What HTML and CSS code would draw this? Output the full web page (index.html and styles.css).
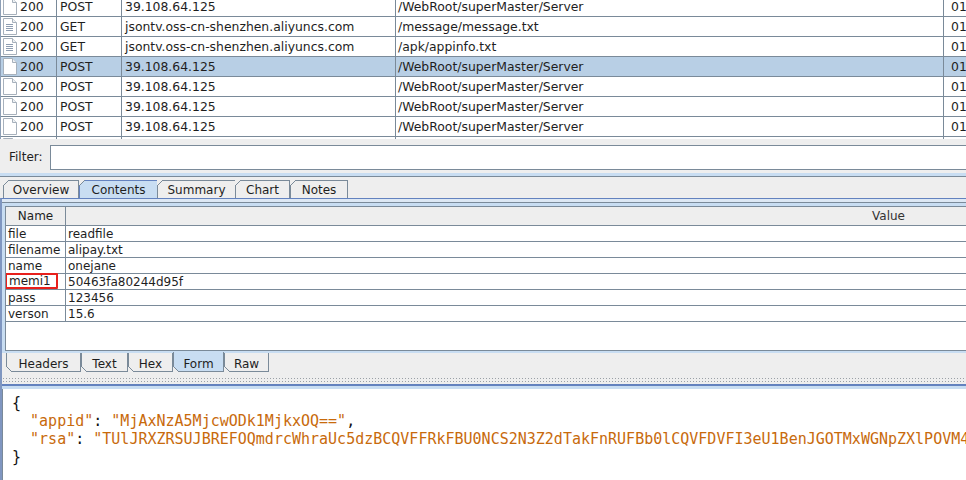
FILE: index.html
```html
<!DOCTYPE html>
<html>
<head>
<meta charset="utf-8">
<link rel="stylesheet" href="styles.css">
</head>
<body>
<div class="req">
  <div class="req-list">
    <div class="row">
      <div class="cell c-code"><svg class="doc" width="14" height="17" viewBox="0 0 14 17"><path d="M0.5 0.5H9.5L13.5 4.5V16.5H0.5Z" fill="#fff" stroke="#a7b1bc"/><path d="M9.5 0.5V4.5H13.5" fill="#eef1f4" stroke="#a7b1bc"/></svg><span>200</span></div>
      <div class="cell c-m">POST</div><div class="cell c-host">39.108.64.125</div><div class="cell c-path">/WebRoot/superMaster/Server</div><div class="cell c-last">01</div>
    </div>
    <div class="row">
      <div class="cell c-code"><svg class="doc" width="14" height="17" viewBox="0 0 14 17"><path d="M0.5 0.5H9.5L13.5 4.5V16.5H0.5Z" fill="#fff" stroke="#a7b1bc"/><path d="M9.5 0.5V4.5H13.5" fill="#eef1f4" stroke="#a7b1bc"/><path d="M3 6.5H10M3 8.5H10M3 10.5H10M3 12.5H10" stroke="#8d9db2"/></svg><span>200</span></div>
      <div class="cell c-m">GET</div><div class="cell c-host">jsontv.oss-cn-shenzhen.aliyuncs.com</div><div class="cell c-path">/message/message.txt</div><div class="cell c-last">01</div>
    </div>
    <div class="row">
      <div class="cell c-code"><svg class="doc" width="14" height="17" viewBox="0 0 14 17"><path d="M0.5 0.5H9.5L13.5 4.5V16.5H0.5Z" fill="#fff" stroke="#a7b1bc"/><path d="M9.5 0.5V4.5H13.5" fill="#eef1f4" stroke="#a7b1bc"/><path d="M3 6.5H10M3 8.5H10M3 10.5H10M3 12.5H10" stroke="#8d9db2"/></svg><span>200</span></div>
      <div class="cell c-m">GET</div><div class="cell c-host">jsontv.oss-cn-shenzhen.aliyuncs.com</div><div class="cell c-path">/apk/appinfo.txt</div><div class="cell c-last">01</div>
    </div>
    <div class="row sel">
      <div class="cell c-code"><svg class="doc" width="14" height="17" viewBox="0 0 14 17"><path d="M0.5 0.5H9.5L13.5 4.5V16.5H0.5Z" fill="#fff" stroke="#a7b1bc"/><path d="M9.5 0.5V4.5H13.5" fill="#eef1f4" stroke="#a7b1bc"/></svg><span>200</span></div>
      <div class="cell c-m">POST</div><div class="cell c-host">39.108.64.125</div><div class="cell c-path">/WebRoot/superMaster/Server</div><div class="cell c-last">01</div>
    </div>
    <div class="row">
      <div class="cell c-code"><svg class="doc" width="14" height="17" viewBox="0 0 14 17"><path d="M0.5 0.5H9.5L13.5 4.5V16.5H0.5Z" fill="#fff" stroke="#a7b1bc"/><path d="M9.5 0.5V4.5H13.5" fill="#eef1f4" stroke="#a7b1bc"/></svg><span>200</span></div>
      <div class="cell c-m">POST</div><div class="cell c-host">39.108.64.125</div><div class="cell c-path">/WebRoot/superMaster/Server</div><div class="cell c-last">01</div>
    </div>
    <div class="row">
      <div class="cell c-code"><svg class="doc" width="14" height="17" viewBox="0 0 14 17"><path d="M0.5 0.5H9.5L13.5 4.5V16.5H0.5Z" fill="#fff" stroke="#a7b1bc"/><path d="M9.5 0.5V4.5H13.5" fill="#eef1f4" stroke="#a7b1bc"/></svg><span>200</span></div>
      <div class="cell c-m">POST</div><div class="cell c-host">39.108.64.125</div><div class="cell c-path">/WebRoot/superMaster/Server</div><div class="cell c-last">01</div>
    </div>
    <div class="row">
      <div class="cell c-code"><svg class="doc" width="14" height="17" viewBox="0 0 14 17"><path d="M0.5 0.5H9.5L13.5 4.5V16.5H0.5Z" fill="#fff" stroke="#a7b1bc"/><path d="M9.5 0.5V4.5H13.5" fill="#eef1f4" stroke="#a7b1bc"/></svg><span>200</span></div>
      <div class="cell c-m">POST</div><div class="cell c-host">39.108.64.125</div><div class="cell c-path">/WebRoot/superMaster/Server</div><div class="cell c-last">01</div>
    </div>
    <div class="row">
      <div class="cell c-code"><svg class="doc" width="14" height="17" viewBox="0 0 14 17"><path d="M0.5 0.5H9.5L13.5 4.5V16.5H0.5Z" fill="#fff" stroke="#a7b1bc"/><path d="M9.5 0.5V4.5H13.5" fill="#eef1f4" stroke="#a7b1bc"/></svg><span>200</span></div>
      <div class="cell c-m">POST</div><div class="cell c-host">39.108.64.125</div><div class="cell c-path">/WebRoot/superMaster/Server</div><div class="cell c-last">01</div>
    </div>
  </div>
</div>

<div class="filter">
  <span class="filter-label">Filter:</span>
  <div class="filter-input"></div>
</div>
<div class="split1"></div>

<div class="tabs">
  <div class="tab t-overview">Overview</div>
  <div class="tab t-contents sel">Contents</div>
  <div class="tab t-summary">Summary</div>
  <div class="tab t-chart">Chart</div>
  <div class="tab t-notes">Notes</div>
</div>

<div class="detail">
  <div class="band"></div>
  <div class="pane">
    <div class="scroll">
      <div class="form-head">
        <div class="fh-name">Name</div>
        <div class="fh-value">Value</div>
      </div>
      <div class="frow"><div class="fn">file</div><div class="fv">readfile</div></div>
      <div class="frow"><div class="fn">filename</div><div class="fv">alipay.txt</div></div>
      <div class="frow"><div class="fn">name</div><div class="fv">onejane</div></div>
      <div class="frow"><div class="fn"><span class="mark">memi1</span></div><div class="fv">50463fa80244d95f</div></div>
      <div class="frow"><div class="fn">pass</div><div class="fv">123456</div></div>
      <div class="frow"><div class="fn">verson</div><div class="fv">15.6</div></div>
    </div>
  </div>
  <div class="btabs">
    <div class="btab b-headers">Headers</div>
    <div class="btab b-text">Text</div>
    <div class="btab b-hex">Hex</div>
    <div class="btab b-form sel">Form</div>
    <div class="btab b-raw">Raw</div>
  </div>
  <div class="divider"><div class="dots"></div></div>
  <div class="respane">
    <pre class="json">{
  <span class="s">"appid"</span>: <span class="s">"MjAxNzA5MjcwODk1MjkxOQ=="</span>,
  <span class="s">"rsa"</span>: <span class="s">"TUlJRXZRSUJBREFOQmdrcWhraUc5dzBCQVFFRkFBU0NCS2N3Z2dTakFnRUFBb0lCQVFDVFI3eU1BenJGOTMxWGNpZXlPOVM4</span>
}</pre>
  </div>
</div>
</body>
</html>
```

FILE: styles.css
```css
* { box-sizing: border-box; }
html, body { margin: 0; padding: 0; }
body {
  width: 966px;
  height: 480px;
  overflow: hidden;
  background: #eeeeee;
  font-family: "DejaVu Sans", sans-serif;
  font-size: 12px;
  color: #1e1e1e;
}

/* request table */
.req {
  height: 139px;
  overflow: hidden;
  background: #fff;
  border-left: 1px solid #8d9fb6;
}
.req-list { margin-top: -3px; font-size: 12.4px; }
.row {
  display: grid;
  grid-template-columns: 56px 65px 274px 548px 80px;
  height: 20px;
  border-bottom: 1px solid #7a8a99;
}
.row.sel { background: #b8cfe5; }
.cell {
  border-right: 1px solid #7a8a99;
  line-height: 19px;
  white-space: nowrap;
  overflow: hidden;
}
.c-code { display: flex; align-items: flex-start; padding-left: 2px; }
.c-code .doc { margin-top: 1px; margin-right: 3px; flex: none; }
.c-m { padding-left: 3px; }
.c-host { padding-left: 3px; }
.c-path { padding-left: 2px; }
.c-last { padding-left: 7px; border-right: none; }

/* filter */
.filter {
  height: 33px;
  display: flex;
  align-items: center;
  padding: 3px 0 0 9px;
}
.filter-label { width: 41px; }
.filter-input {
  flex: 1;
  height: 25px;
  background: #fff;
  border: 1px solid #7a8a99;
  border-right: none;
}
.split1 {
  height: 5px;
  background: linear-gradient(#eeeeee 0 1px, #c8ddf2 1px 4px, #7a8a99 4px 5px);
}

/* top tabs */
.tabs {
  height: 21px;
  display: flex;
  align-items: flex-end;
  padding-left: 3px;
}
.tab {
  position: relative;
  height: 18px;
  line-height: 18px;
  text-align: center;
  border: 1px solid #7a8a99;
  border-bottom: none;
  background: #eeeeee;
}
.t-overview { width: 76px; }
.t-contents { width: 79px; }
.t-summary { width: 79px; margin-left: -1px; }
.t-chart { width: 55px; margin-left: -1px; }
.t-notes { width: 58px; }
.tab.sel { background: #c8ddf2; border-color: #6382bf; }
.tab::before {
  content: "";
  position: absolute;
  left: -1px;
  top: -1px;
  width: 6px;
  height: 6px;
  background: linear-gradient(135deg, #eeeeee 0 42%, #7a8a99 42% 58%, transparent 58%);
}

/* detail */
.detail {
  border-top: 1px solid #6382bf;
  border-left: 2px solid #7f96c0;
}
.band {
  height: 4px;
  background: linear-gradient(#dde8f4 0 3px, #7a8a99 3px 4px);
}
.pane {
  background: #c8ddf2;
  padding: 3px 0 2px 3px;
}
.scroll {
  height: 145px;
  background: #fff;
  border: 1px solid #7a8a99;
  border-right: none;
  overflow: hidden;
}
.form-head {
  display: grid;
  grid-template-columns: 60px 1fr;
  height: 19px;
  background: #eeeeee;
  border-bottom: 1px solid #7a8a99;
}
.fh-name {
  border-right: 1px solid #7a8a99;
  text-align: center;
  line-height: 19px;
}
.fh-value {
  line-height: 19px;
  padding-left: 806px;
  color: #333;
}
.frow {
  display: grid;
  grid-template-columns: 60px 1fr;
  height: 16px;
  border-bottom: 1px solid #7a8a99;
}
.fn {
  border-right: 1px solid #7a8a99;
  padding-left: 2px;
  line-height: 16px;
  white-space: nowrap;
}
.fv {
  padding-left: 2px;
  line-height: 16px;
}
.mark {
  display: inline-block;
  margin-left: -3px;
  padding: 0 1px 0 2px;
  width: 53px;
  height: 16px;
  margin-top: -1px;
  border: 2px solid #e8201c;
  border-radius: 1px;
  line-height: 13px;
  vertical-align: top;
}

/* bottom tabs */
.btabs {
  height: 20px;
  display: flex;
  align-items: flex-start;
  padding-left: 4px;
}
.btab {
  position: relative;
  height: 19px;
  line-height: 23px;
  text-align: center;
  border: 1px solid #7a8a99;
  border-top: none;
  background: #eeeeee;
}
.b-headers { width: 75px; }
.b-text { width: 47px; }
.b-hex { width: 45px; }
.b-form { width: 51px; }
.b-raw { width: 45px; }
.btab.sel { background: #c8ddf2; margin-top: -1px; height: 20px; line-height: 25px; }
.btab::before {
  content: "";
  position: absolute;
  left: -1px;
  bottom: -1px;
  width: 6px;
  height: 6px;
  background: linear-gradient(45deg, #eeeeee 0 42%, #7a8a99 42% 58%, transparent 58%);
}

.divider {
  height: 11px;
  padding-top: 4px;
}
.dots {
  height: 6px;
  background-image: radial-gradient(circle, #9aa0a6 0.7px, transparent 0.9px);
  background-size: 3px 3px;
  background-position: 0 0;
}
.respane {
  border-top: 2px solid #6382bf;
  padding-top: 3px;
  background: #c8ddf2;
  height: 96px;
}
.json {
  margin: 0;
  height: 100%;
  background: #fff;
  border-left: 1px solid #7a8a99;
  padding: 5px 0 0 9px;
  font-family: "DejaVu Sans Mono", monospace;
  font-size: 15px;
  line-height: 18px;
  color: #111;
  white-space: pre;
  overflow: hidden;
}
.s { color: #c86a0c; }
```
